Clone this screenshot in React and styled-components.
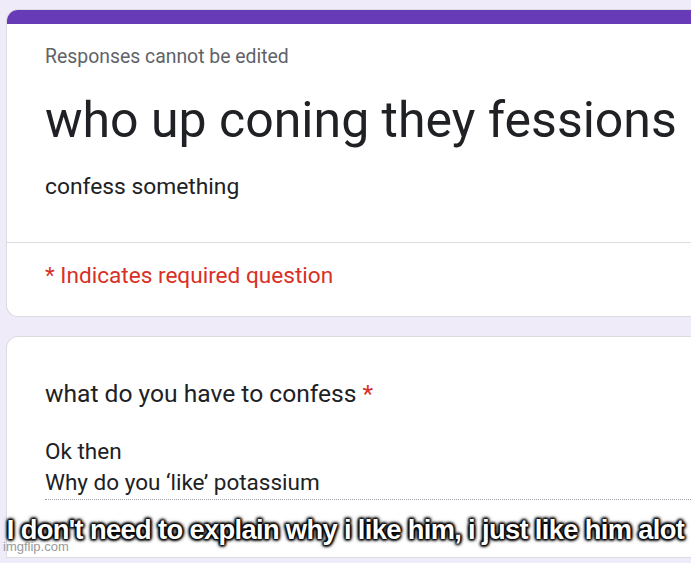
import React from "react";
import styled, { createGlobalStyle } from "styled-components";

const Global = createGlobalStyle`
  html, body {
    margin: 0;
    padding: 0;
    background: #f0ebf8;
  }
  body {
    width: 691px;
    height: 563px;
    overflow: hidden;
    font-family: Roboto, "Noto Sans", Arial, sans-serif;
  }
`;

const Page = styled.div`
  position: relative;
  width: 691px;
  height: 563px;
  padding: 9px 0 5px 6px;
  box-sizing: border-box;
  display: flex;
  flex-direction: column;
  gap: 19px;
`;

const Card = styled.div`
  background: #fff;
  border: 1px solid #dadce0;
  border-right: none;
  border-radius: 12px 0 0 12px;
  overflow: hidden;
  margin-right: -20px;
`;

const TopBar = styled.div`
  height: 15px;
  margin-top: -1px;
  background: #673ab7;
`;

const Header = styled.div`
  padding: 21px 0 0 38px;
`;

const Note = styled.div`
  font-size: 19.4px;
  color: #5f6368;
  line-height: 24px;
`;

const Title = styled.h1`
  margin: 19px 0 0;
  font-size: 50px;
  font-weight: 400;
  line-height: 64px;
  color: #202124;
  white-space: nowrap;
`;

const Desc = styled.div`
  margin-top: 20px;
  font-size: 22.8px;
  line-height: 30px;
  color: #202124;
  padding-bottom: 40px;
`;

const Divider = styled.div`
  border-top: 1px solid #dadce0;
`;

const Required = styled.div`
  padding: 18px 0 25px 38px;
  font-size: 22.6px;
  line-height: 30px;
  color: #d93025;
`;

const QuestionCard = styled(Card)`
  border-radius: 12px 0 0 0;
  padding: 41px 0 0 38px;
  flex: 1;
`;

const Question = styled.div`
  font-size: 24.6px;
  line-height: 32px;
  color: #202124;
`;

const Star = styled.span`
  color: #d93025;
`;

const Answer = styled.div`
  margin-top: 26px;
  font-size: 22.5px;
  line-height: 31px;
  color: #202124;
  border-bottom: 1px dotted #9aa0a6;
  padding-bottom: 1px;
`;

const Caption = styled.div`
  position: absolute;
  left: 0;
  right: 0;
  top: 514px;
  text-align: center;
  font-family: "Liberation Sans", Arial, sans-serif;
  font-weight: 700;
  font-size: 27.3px;
  letter-spacing: -0.65px;
  color: #fff;
  white-space: nowrap;
  text-shadow: 0 0 1px #000, 0 0 2px #000, 0 0 3px #000, 1px 1px 3px #000,
    -1px -1px 3px #000, 1px -1px 3px #000, -1px 1px 3px #000, 0 0 5px #000;
`;

const Watermark = styled.div`
  position: absolute;
  left: 3px;
  top: 539px;
  font-family: "Liberation Sans", Arial, sans-serif;
  font-size: 13px;
  color: #9a9a9a;
`;

export default function App() {
  return (
    <>
      <Global />
      <Page>
        <Card>
          <TopBar />
          <Header>
            <Note>Responses cannot be edited</Note>
            <Title>who up coning they fessions</Title>
            <Desc>confess something</Desc>
          </Header>
          <Divider />
          <Required>* Indicates required question</Required>
        </Card>
        <QuestionCard>
          <Question>
            what do you have to confess <Star>*</Star>
          </Question>
          <Answer>
            Ok then
            <br />
            Why do you ‘like’ potassium
          </Answer>
        </QuestionCard>
        <Caption>I don't need to explain why i like him, i just like him alot</Caption>
        <Watermark>imgflip.com</Watermark>
      </Page>
    </>
  );
}
